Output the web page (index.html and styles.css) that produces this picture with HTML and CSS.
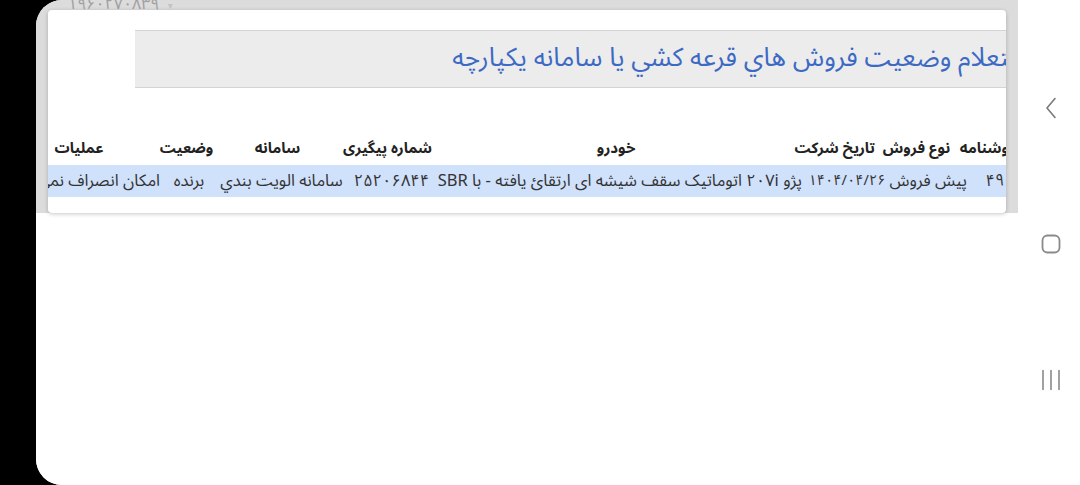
FILE: index.html
```html
<!DOCTYPE html>
<html lang="fa">
<head>
<meta charset="utf-8">
<title>استعلام وضعيت فروش</title>
<link rel="stylesheet" href="styles.css">
</head>
<body>
<div class="screen">
  <div class="panel">
    <div class="app">
      <div class="app-top">
        <div class="ghost-num">۱۹۶۰۲۷۰۸۳۹ <span class="caret">▾</span></div>
        <div class="card" dir="rtl">
          <div class="title-box">
            <h2 class="title">استعلام وضعيت فروش هاي قرعه کشي يا سامانه يکپارچه</h2>
          </div>
          <div class="row head">
            <div class="cell c1">شماره فروشنامه</div>
            <div class="cell c2">نوع فروش</div>
            <div class="cell c3">تاریخ شرکت</div>
            <div class="cell c4">خودرو</div>
            <div class="cell c5">شماره پیگیری</div>
            <div class="cell c6">سامانه</div>
            <div class="cell c7">وضعیت</div>
            <div class="cell c8">عملیات</div>
          </div>
          <div class="row data">
            <div class="cell c1">۴۹۰۱۸۲۳</div>
            <div class="cell c2">پیش فروش</div>
            <div class="cell c3">۱۴۰۴/۰۴/۲۶</div>
            <div class="cell c4">پژو ۲۰۷i اتوماتیک سقف شیشه ای ارتقائ یافته - با SBR</div>
            <div class="cell c5">۲۵۲۰۶۸۴۴</div>
            <div class="cell c6">سامانه الويت بندي</div>
            <div class="cell c7">برنده</div>
            <div class="cell c8">امکان انصراف نمي باشد</div>
          </div>
        </div>
      </div>
      <div class="app-rest"></div>
    </div>
    <nav class="nav">
      <svg class="nav-icon" width="14" height="22" viewBox="0 0 14 22"><path d="M11 1.5 L3 11 L11 20.5" fill="none" stroke="#7a7a7a" stroke-width="1.6" stroke-linecap="round" stroke-linejoin="round"/></svg>
      <svg class="nav-icon" width="20" height="20" viewBox="0 0 20 20"><rect x="1.5" y="1.5" width="17" height="17" rx="5" fill="none" stroke="#8a8a8a" stroke-width="1.8"/></svg>
      <svg class="nav-icon" width="20" height="22" viewBox="0 0 20 22"><path d="M2 1.5 V20.5 M10 1.5 V20.5 M18 1.5 V20.5" fill="none" stroke="#8a8a8a" stroke-width="1.6" stroke-linecap="round"/></svg>
    </nav>
  </div>
</div>
</body>
</html>
```
FILE: styles.css
```css
html, body {
  margin: 0;
  padding: 0;
  background: #000;
}
body {
  width: 1080px;
  height: 485px;
  overflow: hidden;
  font-family: "Noto Sans Arabic", "DejaVu Sans", sans-serif;
}
.screen {
  display: flex;
  height: 485px;
  padding-left: 36px;
  box-sizing: border-box;
}
.panel {
  flex: 1;
  display: flex;
  background: #fff;
  border-radius: 26px 0 0 26px;
  overflow: hidden;
}
.app {
  width: 982px;
  display: flex;
  flex-direction: column;
}
.app-top {
  position: relative;
  height: 213px;
  background: #dcdcdc;
  padding: 10px 12px 0 12px;
  box-sizing: border-box;
}
.ghost-num {
  position: absolute;
  top: -13px;
  left: 32px;
  font-size: 16px;
  color: #a0a0a0;
  direction: ltr;
}
.ghost-num .caret {
  font-size: 10px;
  color: #c4c4c4;
  margin-left: 4px;
}
.card {
  position: relative;
  width: 958px;
  height: 203px;
  background: #fff;
  border-radius: 4px;
  box-shadow: 0 1px 4px rgba(0, 0, 0, 0.22);
  overflow: hidden;
  padding-top: 20px;
  box-sizing: border-box;
}
.title-box {
  width: 911px;
  margin-right: -40px;
  background: #ececec;
  border-top: 1px solid #d4d4d4;
  border-bottom: 1px solid #d4d4d4;
}
.title {
  margin: 0;
  padding-right: 10px;
  height: 56px;
  line-height: 54px;
  font-size: 26px;
  font-weight: normal;
  color: #3c69c4;
  white-space: nowrap;
}
.row {
  display: flex;
  width: 1070px;
  margin-right: -64px;
  height: 32px;
}
.cell {
  flex: none;
  text-align: center;
  white-space: nowrap;
  line-height: 32px;
}
.head {
  margin-top: 44px;
}
.head .cell {
  font-size: 15px;
  font-weight: bold;
  color: #222;
}
.data {
  margin-top: 1px;
  background: #d0e1fb;
}
.data .cell {
  font-size: 16.5px;
  color: #333;
}
.data .c3 {
  font-size: 14.5px;
}
.head .c1 { width: 112px; }
.head .c2 { width: 83px; }
.head .c3 { width: 78px; }
.head .c4 { width: 362px; }
.head .c5 { width: 95px; }
.head .c6 { width: 125px; }
.head .c7 { width: 57px; }
.head .c8 { width: 158px; }
.data .c1 { width: 103px; }
.data .c2 { width: 75px; }
.data .c3 { width: 90px; }
.data .c4 { width: 364px; }
.data .c5 { width: 93px; }
.data .c6 { width: 127px; }
.data .c7 { width: 58px; }
.data .c8 { width: 155px; }
.app-rest {
  flex: 1;
  background: #fff;
}
.nav {
  flex: 1;
  display: flex;
  flex-direction: column;
  align-items: center;
  gap: 115px;
  padding-top: 97px;
  padding-left: 4px;
  background: #fff;
}
.nav-icon {
  display: block;
}
```
